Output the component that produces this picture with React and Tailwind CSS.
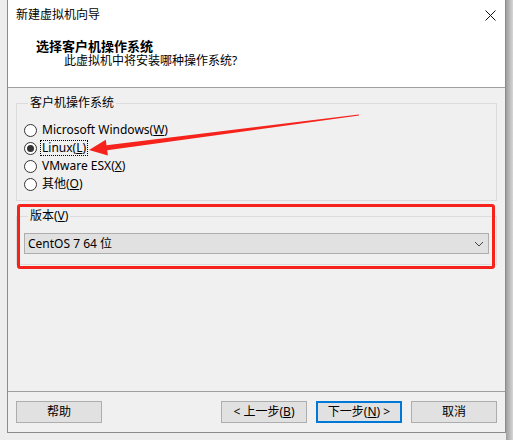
import React from "react";

const F = { fontFamily: '"Noto Sans", "Noto Sans CJK SC", sans-serif' };

function Radio({ checked, children, focus }) {
  return (
    <div className="flex items-center h-[18px]">
      <div className="w-[13px] h-[13px] rounded-full border border-[#333] bg-white flex items-center justify-center">
        {checked && <div className="w-[7px] h-[7px] rounded-full bg-[#333]" />}
      </div>
      <span
        className={
          "ml-[3px] text-[12px] leading-[14px] text-black px-[1px] " +
          (focus ? "border border-dotted border-black" : "border border-transparent")
        }
      >
        {children}
      </span>
    </div>
  );
}

function Btn({ children, primary }) {
  return (
    <div
      className={
        "w-[86px] h-[22px] flex items-center justify-center bg-[#e1e1e1] text-[12px] text-black " +
        (primary ? "border-2 border-[#0078d7]" : "border border-[#adadad]")
      }
    >
      {children}
    </div>
  );
}

export default function App() {
  return (
    <div className="w-[513px] h-[440px] bg-[#ededed] relative flex overflow-hidden" style={F}>
      <div className="w-[7px]" />
      <div className="w-[499px] h-[433px] border-l border-r border-b border-[#8c8c8c] bg-[#f0f0f0] flex flex-col">
        {/* header */}
        <div className="h-[88px] bg-white border-b border-[#a0a0a0] relative">
          <div className="flex items-center justify-between pl-[8px] pr-[9px] pt-[8px] h-[22px]">
            <span className="text-[12px] leading-[14px] text-black">新建虚拟机向导</span>
            <svg width="11" height="11" viewBox="0 0 11 11">
              <path d="M0.5 0.5 L10.5 10.5 M10.5 0.5 L0.5 10.5" stroke="#111" strokeWidth="1" />
            </svg>
          </div>
          <div className="pl-[28px] mt-[17px] text-[13px] leading-[15px] font-bold text-black">
            选择客户机操作系统
          </div>
          <div className="pl-[56px] text-[12px] leading-[14px] text-black">
            此虚拟机中将安装哪种操作系统?
          </div>
        </div>

        {/* content */}
        <div className="flex-1 px-[8px] flex flex-col">
          <fieldset className="mt-[7px] border border-[#dcdcdc] pl-[7px] pt-[10px] pb-[6px] h-[106px]">
            <legend className="ml-[4px] px-[2px] text-[12px] leading-[16px] text-black">客户机操作系统</legend>
            <Radio>
              Microsoft Windows(<span className="underline">W</span>)
            </Radio>
            <Radio checked focus>
              Linux(<span className="underline">L</span>)
            </Radio>
            <Radio>
              VMware ESX(<span className="underline">X</span>)
            </Radio>
            <Radio>
              其他(<span className="underline">O</span>)
            </Radio>
          </fieldset>

          <fieldset className="mt-[7px] border border-[#dcdcdc] px-[7px] pt-[9px] pb-[10px]">
            <legend className="ml-[4px] px-[2px] text-[12px] leading-[16px] text-black">
              版本(<span className="underline">V</span>)
            </legend>
            <div className="h-[21px] bg-[#e1e1e1] border border-[#adadad] flex items-center justify-between pl-[3px] pr-[4px]">
              <span className="text-[12px] leading-[14px] text-black">CentOS 7 64 位</span>
              <svg width="10" height="6" viewBox="0 0 10 6">
                <path d="M1 1 L5 5 L9 1" fill="none" stroke="#444" strokeWidth="1" />
              </svg>
            </div>
          </fieldset>
          <div className="flex-1" />
        </div>

        {/* footer */}
        <div className="h-[41px] border-t border-[#a0a0a0] px-[8px] pt-[9px] flex items-start">
          <Btn>帮助</Btn>
          <div className="flex-1" />
          <div className="flex gap-[9px]">
            <Btn>
              &lt; 上一步(<span className="underline">B</span>)
            </Btn>
            <Btn primary>
              下一步(<span className="underline">N</span>) &gt;
            </Btn>
            <Btn>取消</Btn>
          </div>
        </div>
      </div>
      <div className="w-[7px] h-[440px] bg-gradient-to-r from-[#9e9e9e] to-[#d6d6d6]" />

      {/* annotations */}
      <div className="absolute left-[17px] top-[204px] w-[478px] h-[65px] border-[3px] border-[#f5231b] rounded-[3px]" />
      <svg className="absolute left-0 top-0" width="513" height="440" viewBox="0 0 513 440">
        <polygon
          points="89,150 107.9,155.6 107.2,150.2 359.1,115.6 358.9,114.4 106.5,145.2 105.8,139.7"
          fill="#f5231b"
        />
      </svg>
    </div>
  );
}
